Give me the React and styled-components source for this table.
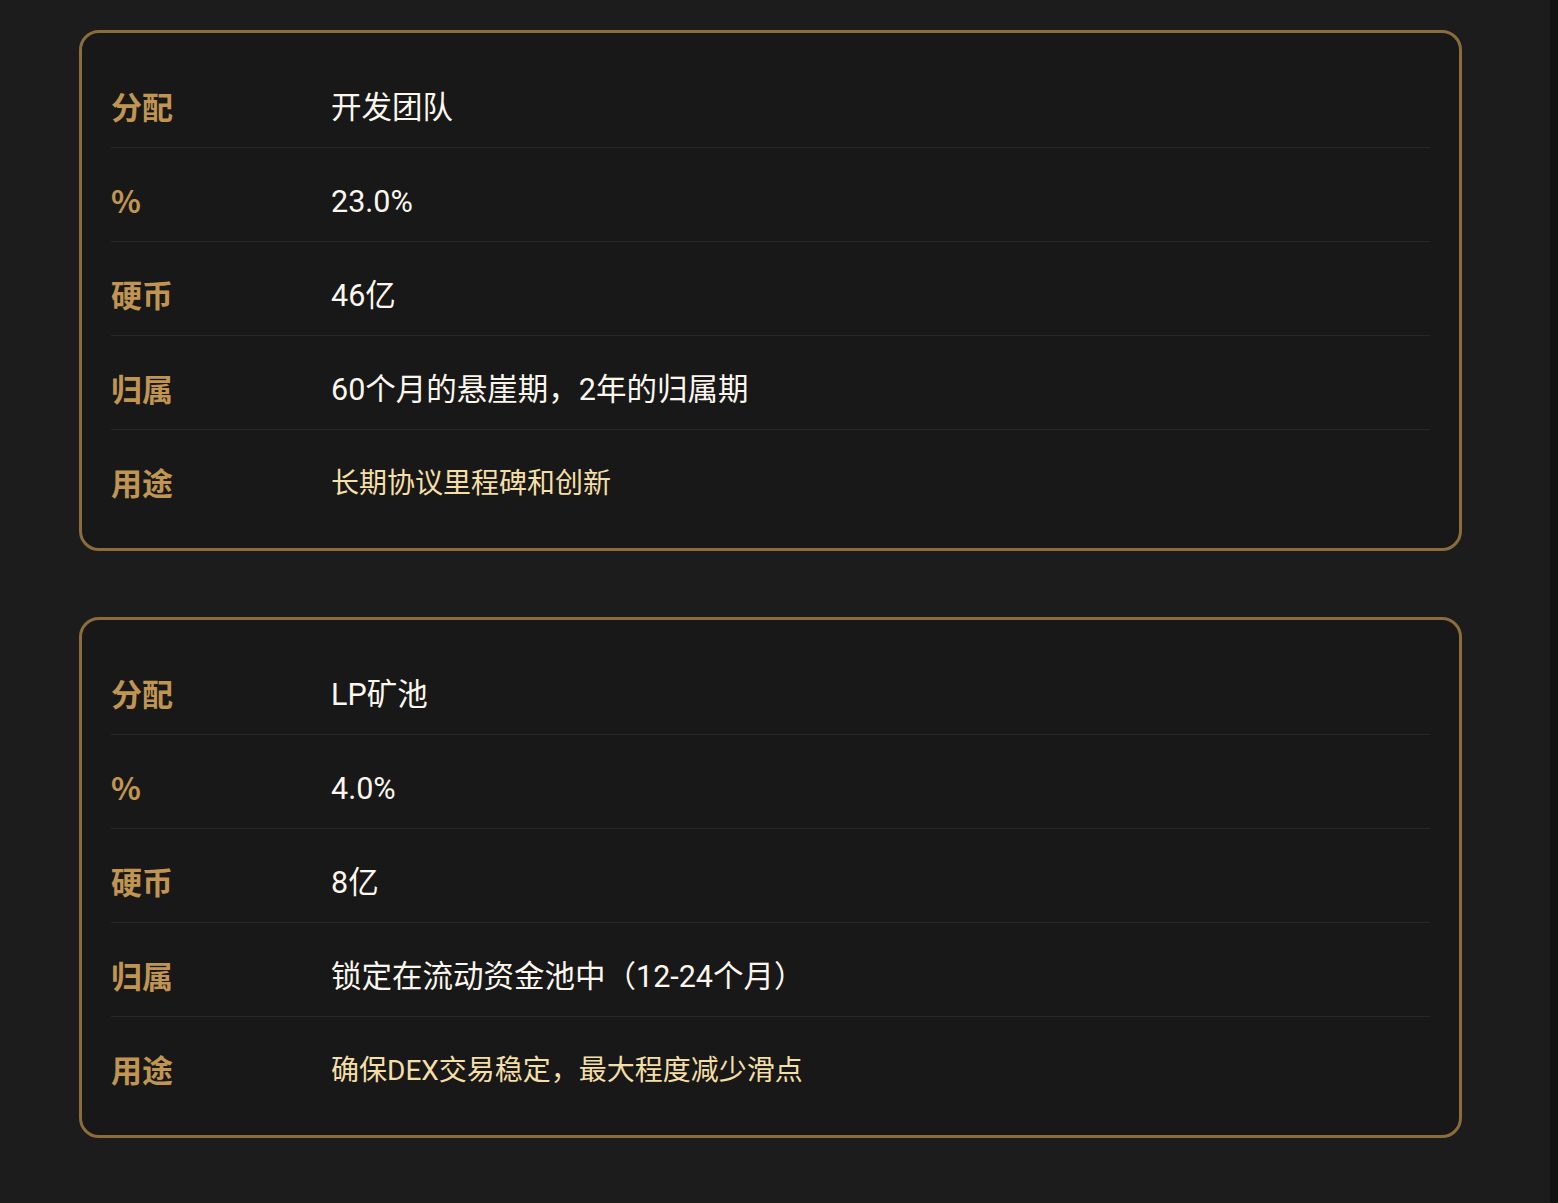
import styled, { createGlobalStyle } from "styled-components";

const tables = [
  [
    { label: "分配", value: "开发团队" },
    { label: "%", value: "23.0%" },
    { label: "硬币", value: "46亿" },
    { label: "归属", value: "60个月的悬崖期，2年的归属期" },
    { label: "用途", value: "长期协议里程碑和创新", accent: true },
  ],
  [
    { label: "分配", value: "LP矿池" },
    { label: "%", value: "4.0%" },
    { label: "硬币", value: "8亿" },
    { label: "归属", value: "锁定在流动资金池中（12-24个月）" },
    { label: "用途", value: "确保DEX交易稳定，最大程度减少滑点", accent: true },
  ],
];

const App = () => {
  return (
    <>
      <GlobalStyle />
      <Page>
        <Content>
          {tables.map((rows, i) => (
            <Card key={i}>
              {rows.map((row) => (
                <Row key={row.label}>
                  <Label>{row.label}</Label>
                  <Value $accent={row.accent}>{row.value}</Value>
                </Row>
              ))}
            </Card>
          ))}
        </Content>
        <ScrollTrack />
      </Page>
    </>
  );
};

export default App;

// styles
const GlobalStyle = createGlobalStyle`
  html, body {
    margin: 0;
    padding: 0;
    background: #1c1c1c;
  }
  body {
    font-family: Roboto, "Noto Sans CJK SC", sans-serif;
  }
`;

const Page = styled.div`
  display: flex;
  min-height: 1203px;
  background: #1c1c1c;
`;

const Content = styled.main`
  flex: 1;
  display: flex;
  flex-direction: column;
  gap: 66px;
  padding: 30px 0 0 79px;
`;

const ScrollTrack = styled.div`
  width: 8px;
  background: #121212;
`;

const Card = styled.section`
  width: 1383px;
  box-sizing: border-box;
  background: #181818;
  border: 3px solid #8a6c3d;
  border-radius: 20px;
  padding: 21px 29px 25px;
`;

const Row = styled.div`
  display: flex;
  align-items: center;
  padding: 34px 0 19px;
  border-bottom: 1px solid #262626;

  &:last-child {
    border-bottom: none;
  }
`;

const Label = styled.div`
  width: 220px;
  flex-shrink: 0;
  margin-top: -4px;
  font-family: "Noto Sans CJK SC", sans-serif;
  font-weight: 700;
  font-size: 31px;
  line-height: 40px;
  color: #c09552;
`;

const Value = styled.div`
  font-family: Roboto, "Noto Sans CJK SC", sans-serif;
  font-size: ${(p) => (p.$accent ? "28px" : "30.5px")};
  line-height: 40px;
  color: ${(p) => (p.$accent ? "#f4dfa6" : "#fbf7ee")};
`;
